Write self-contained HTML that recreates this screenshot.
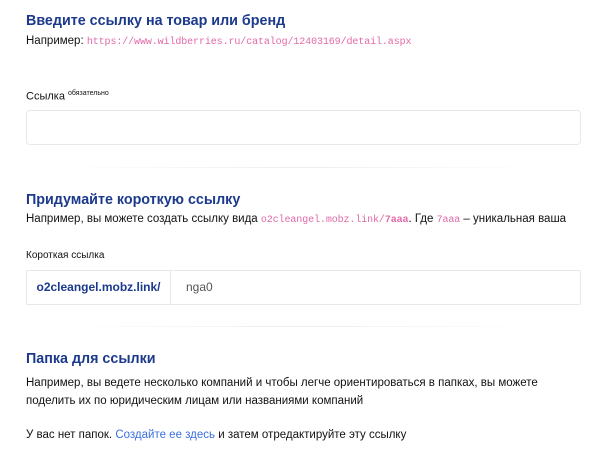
<!DOCTYPE html>
<html><head><meta charset="utf-8"><style>
body{margin:0;width:600px;height:451px;background:#fff;font-family:"Liberation Sans",Arial,sans-serif;color:#111;position:relative;overflow:hidden}
.a{position:absolute;left:26px;white-space:nowrap}
h2{margin:0;font-size:14.3px;font-weight:bold;color:#1b3a8c}
.t{font-size:11.5px}
.m{font-family:"Liberation Mono",monospace;color:#e26aa8;font-size:10px;letter-spacing:-0.1px}
.mb{font-weight:bold}
.box{position:absolute;left:26px;width:553px;border:1px solid #e6e8ee;border-radius:4px;background:#fff}
.sep{position:absolute;left:60px;width:480px;height:1px;background:linear-gradient(90deg,#fff,#eceef2,#fff)}
</style></head><body>
<h2 class="a" style="top:13px">Введите ссылку на товар или бренд</h2>
<div class="a t" style="top:35px">Например: <span class="m">https://www.wildberries.ru/catalog/12403169/detail.aspx</span></div>
<div class="a" style="top:90px;font-size:11px">Ссылка <sup style="font-size:7px">обязательно</sup></div>
<div class="box" style="top:110px;height:33px"></div>
<div class="sep" style="top:167px"></div>
<h2 class="a" style="top:192px">Придумайте короткую ссылку</h2>
<div class="a t" style="top:213px">Например, вы можете создать ссылку вида <span class="m">o2cleangel.mobz.link/<span class="mb">7aaa</span></span>. Где <span class="m">7aaa</span> – уникальная ваша</div>
<div class="a" style="top:250px;font-size:10px">Короткая ссылка</div>
<div class="box" style="top:270px;height:33px;border-radius:2px">
<div style="position:absolute;left:0;top:0;width:143px;height:33px;border-right:1px solid #e6e8ee;font-size:12px;font-weight:bold;color:#1b3a8c;line-height:33px;text-align:center">o2cleangel.mobz.link/</div>
<div style="position:absolute;left:159px;top:0;line-height:33px;font-size:12px;color:#555">nga0</div>
</div>
<div class="sep" style="top:326px"></div>
<h2 class="a" style="top:351px">Папка для ссылки</h2>
<div class="a t" style="top:374px;line-height:18px">Например, вы ведете несколько компаний и чтобы легче ориентироваться в папках, вы можете<br>поделить их по юридическим лицам или названиями компаний</div>
<div class="a t" style="top:429px">У вас нет папок. <span style="color:#3b6fe0">Создайте ее здесь</span> и затем отредактируйте эту ссылку</div>
</body></html>
